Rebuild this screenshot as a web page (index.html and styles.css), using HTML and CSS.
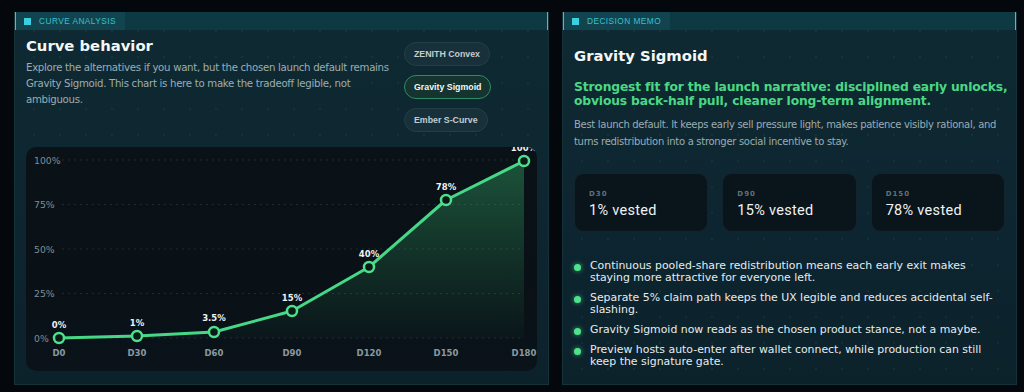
FILE: index.html
```html
<!DOCTYPE html>
<html>
<head>
<meta charset="utf-8">
<link rel="stylesheet" href="styles.css">
</head>
<body>
<section class="panel panel-left">
  <div class="phead"><div class="tab"><span class="sq"></span>CURVE ANALYSIS</div></div>
  <div class="pbody">
    <div class="top">
      <div class="intro">
        <h1 class="title">Curve behavior</h1>
        <p class="lead">Explore the alternatives if you want, but the chosen launch default remains Gravity Sigmoid. This chart is here to make the tradeoff legible, not ambiguous.</p>
      </div>
      <div class="btns">
        <button class="btn">ZENITH Convex</button>
        <button class="btn active">Gravity Sigmoid</button>
        <button class="btn">Ember S-Curve</button>
      </div>
    </div>
    <div class="chart">
      <svg width="511" height="224" viewBox="0 0 511 224">
        <defs>
          <linearGradient id="area" x1="0" y1="0" x2="0" y2="1">
            <stop offset="0" stop-color="#3fcf7a" stop-opacity="0.34"/>
            <stop offset="1" stop-color="#3fcf7a" stop-opacity="0.02"/>
          </linearGradient>
        </defs>
        <g class="grid">
          <line x1="36" y1="13" x2="498" y2="13"/>
          <line x1="36" y1="57.5" x2="498" y2="57.5"/>
          <line x1="36" y1="102" x2="498" y2="102"/>
          <line x1="36" y1="146.5" x2="498" y2="146.5"/>
          <line x1="36" y1="191" x2="498" y2="191"/>
        </g>
        <g class="ylab">
          <text x="8" y="16.5">100%</text>
          <text x="8" y="61">75%</text>
          <text x="8" y="105.5">50%</text>
          <text x="8" y="150">25%</text>
          <text x="8" y="194.5">0%</text>
        </g>
        <path class="area" d="M33 191 L111 189 L188 185 L266 164 L343 120 L420 53 L498 14 L498 191 Z"/>
        <path class="line" d="M33 191 L111 189 L188 185 L266 164 L343 120 L420 53 L498 14"/>
        <g class="pts">
          <circle cx="33" cy="191" r="5"/>
          <circle cx="111" cy="189" r="5"/>
          <circle cx="188" cy="185" r="5"/>
          <circle cx="266" cy="164" r="5"/>
          <circle cx="343" cy="120" r="5"/>
          <circle cx="420" cy="53" r="5"/>
          <circle cx="498" cy="14" r="5"/>
        </g>
        <g class="plab">
          <text x="33" y="181">0%</text>
          <text x="111" y="179">1%</text>
          <text x="188" y="174">3.5%</text>
          <text x="266" y="154">15%</text>
          <text x="343" y="110">40%</text>
          <text x="420" y="43">78%</text>
          <text x="498" y="4">100%</text>
        </g>
        <g class="xlab">
          <text x="33" y="209">D0</text>
          <text x="111" y="209">D30</text>
          <text x="188" y="209">D60</text>
          <text x="266" y="209">D90</text>
          <text x="343" y="209">D120</text>
          <text x="420" y="209">D150</text>
          <text x="498" y="209">D180</text>
        </g>
      </svg>
    </div>
  </div>
</section>
<section class="panel panel-right">
  <div class="phead"><div class="tab"><span class="sq"></span>DECISION MEMO</div></div>
  <div class="pbody memo">
    <h2 class="title">Gravity Sigmoid</h2>
    <p class="pitch">Strongest fit for the launch narrative: disciplined early unlocks, obvious back-half pull, cleaner long-term alignment.</p>
    <p class="desc">Best launch default. It keeps early sell pressure light, makes patience visibly rational, and turns redistribution into a stronger social incentive to stay.</p>
    <div class="stats">
      <div class="stat"><div class="slab">D30</div><div class="sval">1% vested</div></div>
      <div class="stat"><div class="slab">D90</div><div class="sval">15% vested</div></div>
      <div class="stat"><div class="slab">D150</div><div class="sval">78% vested</div></div>
    </div>
    <ul class="points">
      <li>Continuous pooled-share redistribution means each early exit makes staying more attractive for everyone left.</li>
      <li>Separate 5% claim path keeps the UX legible and reduces accidental self-slashing.</li>
      <li>Gravity Sigmoid now reads as the chosen product stance, not a maybe.</li>
      <li>Preview hosts auto-enter after wallet connect, while production can still keep the signature gate.</li>
    </ul>
  </div>
</section>
</body>
</html>
```
FILE: styles.css
```css
* { box-sizing: border-box; }
html, body { margin: 0; padding: 0; }
body {
  width: 1024px;
  height: 392px;
  overflow: hidden;
  background: #04080c;
  display: flex;
  align-items: flex-start;
  gap: 13px;
  padding: 12px 0 0 14px;
  font-family: "DejaVu Sans", Roboto, sans-serif;
  color: #e4eaec;
}
.panel {
  height: 373px;
  background:
    radial-gradient(circle, rgba(120, 180, 190, 0.07) 0.8px, transparent 1.2px) 6px 6px / 26px 26px,
    linear-gradient(180deg, #0f2a33 0%, #0d2530 60%, #0c222b 100%);
  border: 1px solid #15323b;
  border-top: none;
  overflow: hidden;
}
.panel-left { width: 535px; }
.panel-right { width: 455px; }
.phead {
  height: 18px;
  background: #0d3942;
  border-left: 2px solid #38c6d6;
  border-right: 2px solid #38c6d6;
  margin: 0 -1px;
  display: flex;
}
.tab {
  display: flex;
  align-items: center;
  gap: 8px;
  padding: 0 9px 0 8px;
  background: #12444f;
  color: #39c0cf;
  font-family: "Liberation Sans", sans-serif;
  font-size: 8.3px;
  letter-spacing: 0.45px;
}
.sq {
  width: 7px;
  height: 7px;
  background: #3ccfdf;
}
.pbody { padding: 6px 11px 0 11px; }
.top { display: flex; align-items: flex-start; }
.intro { width: 370px; margin-right: 8px; }
.title {
  margin: 0;
  font-family: "DejaVu Sans", sans-serif;
  font-size: 14.8px;
  line-height: 20px;
  font-weight: 700;
  color: #f4f7f8;
}
.lead {
  margin: 4px 0 0;
  font-size: 10.2px;
  line-height: 16px;
  letter-spacing: -0.3px;
  color: #9cadb3;
}
.btns {
  display: flex;
  flex-direction: column;
  align-items: flex-start;
  gap: 9px;
  padding-top: 6px;
}
.btn {
  height: 24px;
  padding: 0 9px;
  border-radius: 12px;
  border: 1px solid #223f48;
  background: #183039;
  color: #c3ccd0;
  font-family: "Liberation Sans", sans-serif;
  font-weight: 700;
  font-size: 8.8px;
}
.btn.active {
  border-color: #2f8b66;
  background: #15332f;
  color: #f2f6f5;
}
.chart {
  margin-top: 15px;
  width: 511px;
  height: 224px;
  border-radius: 10px;
  background: linear-gradient(180deg, #0a1218 0%, #091117 60%, #0a1319 100%);
  overflow: hidden;
}
.chart svg { display: block; }
.grid line { stroke: #1f2b33; stroke-width: 1; stroke-dasharray: 2 4; }
.ylab text {
  fill: #7d8d94;
  font-family: "DejaVu Sans", sans-serif;
  font-size: 9.3px;
}
.area { fill: url(#area); }
.line { fill: none; stroke: #47d887; stroke-width: 3; stroke-linejoin: round; stroke-linecap: round; }
.pts circle { fill: #0b1a16; stroke: #4ee08e; stroke-width: 2.5; }
.plab text {
  fill: #eef3f4;
  font-family: "DejaVu Sans", sans-serif;
  font-weight: 700;
  font-size: 8.5px;
  text-anchor: middle;
}
.xlab text {
  fill: #8a9aa1;
  font-family: "DejaVu Sans", sans-serif;
  font-weight: 700;
  font-size: 8.5px;
  text-anchor: middle;
}
.memo { padding-top: 16px; }
.pitch {
  margin: 14px -4px 0 0;
  font-family: "DejaVu Sans", sans-serif;
  font-size: 12.3px;
  line-height: 14px;
  letter-spacing: -0.15px;
  font-weight: 700;
  color: #4bd884;
}
.desc {
  margin: 8px -6px 0 0;
  font-size: 10px;
  line-height: 17px;
  letter-spacing: -0.3px;
  color: #9cacb2;
}
.stats {
  margin-top: 23px;
  display: grid;
  grid-template-columns: repeat(3, 1fr);
  gap: 14px;
}
.stat {
  height: 59px;
  border-radius: 10px;
  background: #0a141b;
  border: 1px solid #13242c;
  padding: 15px 14px 0;
}
.slab {
  font-family: "DejaVu Sans", sans-serif;
  font-weight: 700;
  font-size: 7px;
  line-height: 10px;
  letter-spacing: 1px;
  color: #5f7178;
}
.sval {
  margin-top: 3px;
  font-family: Roboto, sans-serif;
  font-size: 14.5px;
  line-height: 18px;
  letter-spacing: 0.3px;
  color: #eef3f4;
}
.points {
  list-style: none;
  margin: 28px 0 0;
  padding: 0 0 0 16px;
  display: flex;
  flex-direction: column;
  gap: 8px;
}
.points li {
  position: relative;
  font-size: 10.9px;
  line-height: 12px;
  color: #e6ecee;
}
.points li::before {
  content: "";
  position: absolute;
  left: -16px;
  top: 4px;
  width: 7px;
  height: 7px;
  border-radius: 50%;
  background: #4fe28c;
  box-shadow: 0 0 5px rgba(79, 226, 140, 0.7);
}
```
